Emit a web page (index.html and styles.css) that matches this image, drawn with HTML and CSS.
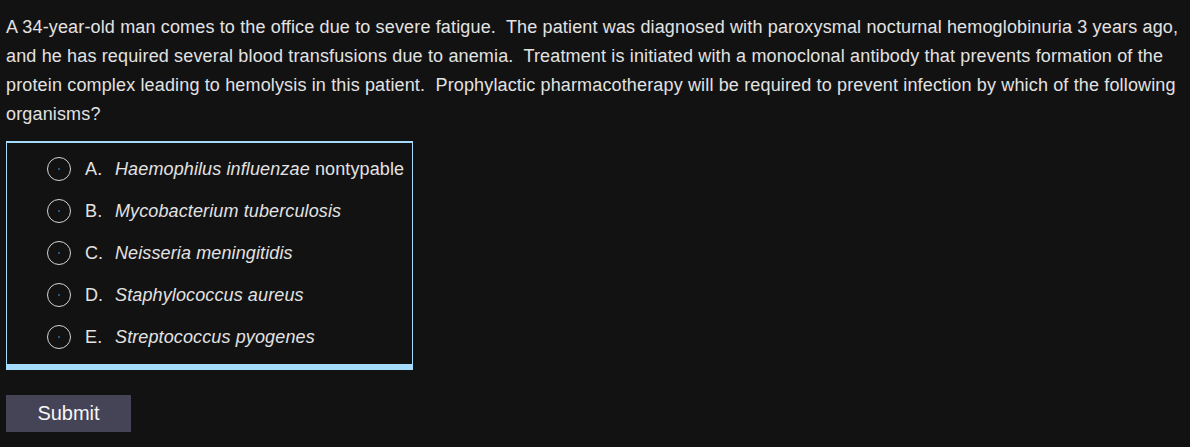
FILE: index.html
```html
<!DOCTYPE html>
<html lang="en">
<head>
<meta charset="utf-8">
<title>Question</title>
<link rel="stylesheet" href="styles.css">
</head>
<body>
<main class="page">
  <p class="stem">A 34-year-old man comes to the office due to severe fatigue.&nbsp; The patient was diagnosed with paroxysmal nocturnal hemoglobinuria 3 years ago, and he has required several blood transfusions due to anemia.&nbsp; Treatment is initiated with a monoclonal antibody that prevents formation of the protein complex leading to hemolysis in this patient.&nbsp; Prophylactic pharmacotherapy will be required to prevent infection by which of the following organisms?</p>
  <div class="choices">
    <label class="choice"><span class="radio"><span class="dot"></span></span><span class="letter">A.</span><span class="answer"><i>Haemophilus influenzae</i> nontypable</span></label>
    <label class="choice"><span class="radio"><span class="dot"></span></span><span class="letter">B.</span><span class="answer"><i>Mycobacterium tuberculosis</i></span></label>
    <label class="choice"><span class="radio"><span class="dot"></span></span><span class="letter">C.</span><span class="answer"><i>Neisseria meningitidis</i></span></label>
    <label class="choice"><span class="radio"><span class="dot"></span></span><span class="letter">D.</span><span class="answer"><i>Staphylococcus aureus</i></span></label>
    <label class="choice"><span class="radio"><span class="dot"></span></span><span class="letter">E.</span><span class="answer"><i>Streptococcus pyogenes</i></span></label>
  </div>
  <button class="submit" type="button">Submit</button>
</main>
</body>
</html>
```
FILE: styles.css
```css
html, body {
  margin: 0;
  padding: 0;
  background: #121212;
}
.page {
  padding: 13px 6px 0 6px;
  font-family: "Liberation Sans", Arial, sans-serif;
  color: #e2e2e2;
}
.stem {
  margin: 0;
  font-size: 18px;
  letter-spacing: 0.15px;
  line-height: 29px;
}
.choices {
  margin-top: 12px;
  width: 405px;
  border: 1px solid #a6dcfb;
  border-top-width: 2px;
  border-bottom-width: 6px;
  padding: 5px 0 6px 0;
  display: flex;
  flex-direction: column;
}
.choice {
  display: flex;
  align-items: center;
  height: 42px;
  padding-left: 40px;
  font-size: 18px;
  letter-spacing: 0.12px;
  white-space: nowrap;
}
.radio {
  width: 24px;
  height: 24px;
  box-sizing: border-box;
  border: 1.5px solid #d4d4d4;
  border-radius: 50%;
  display: flex;
  align-items: center;
  justify-content: center;
  flex: none;
}
.dot {
  width: 2px;
  height: 2px;
  background: #2a6fa8;
  border-radius: 50%;
}
.letter {
  margin-left: 14px;
  width: 30px;
}
.answer i {
  font-style: italic;
}
.submit {
  margin-top: 25px;
  width: 125px;
  height: 37px;
  border: none;
  background: #454356;
  color: #f6f6f6;
  font-family: "Liberation Sans", Arial, sans-serif;
  font-size: 20px;
  padding: 0;
  cursor: pointer;
}
```
